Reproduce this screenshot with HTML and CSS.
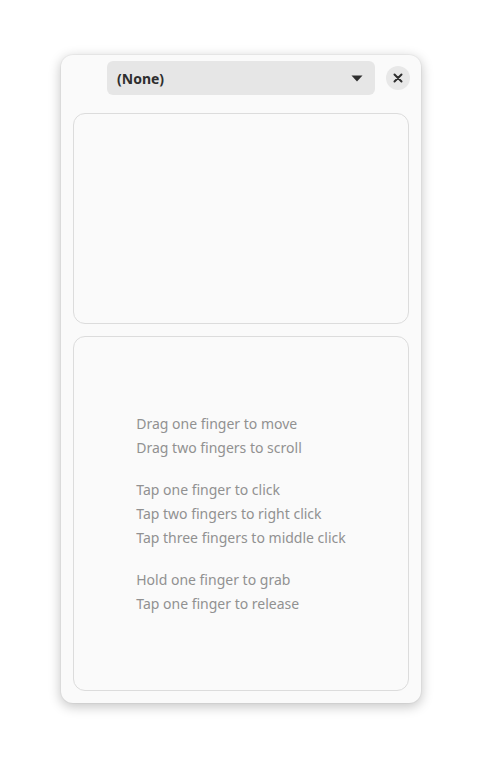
FILE: index.html
```html
<!DOCTYPE html>
<html>
<head>
<meta charset="utf-8">
<link rel="stylesheet" href="styles.css">
</head>
<body>
<div class="window">
  <div class="header">
    <div class="dropdown">
      <span class="dd-label">(None)</span>
      <svg class="dd-arrow" width="12" height="7" viewBox="0 0 12 7"><path d="M0.5 0.5 L11.5 0.5 L6 6.5 Z" fill="#2e2e2e"/></svg>
    </div>
    <div class="close">
      <svg width="10" height="10" viewBox="0 0 10 10"><path d="M1.5 1.5 L8.5 8.5 M8.5 1.5 L1.5 8.5" stroke="#2e2e2e" stroke-width="2" stroke-linecap="round"/></svg>
    </div>
  </div>
  <div class="panel panel-top"></div>
  <div class="panel panel-bottom">
    <div class="help">
      <div class="group">
        <div>Drag one finger to move</div>
        <div>Drag two fingers to scroll</div>
      </div>
      <div class="group">
        <div>Tap one finger to click</div>
        <div>Tap two fingers to right click</div>
        <div>Tap three fingers to middle click</div>
      </div>
      <div class="group">
        <div>Hold one finger to grab</div>
        <div>Tap one finger to release</div>
      </div>
    </div>
  </div>
</div>
</body>
</html>
```
FILE: styles.css
```css
html, body {
  margin: 0;
  padding: 0;
  background: #ffffff;
}
body {
  width: 482px;
  height: 770px;
  font-family: "Noto Sans", "Open Sans", sans-serif;
}
.window {
  margin: 55px 0 0 61px;
  width: 360px;
  height: 648px;
  box-sizing: border-box;
  background: #fafafa;
  border-radius: 12px;
  box-shadow: 0 3px 12px 1px rgba(0,0,0,0.22), 0 0 0 1px rgba(0,0,0,0.03);
  display: flex;
  flex-direction: column;
  padding: 6px 12px 12px 12px;
  gap: 12px;
}
.header {
  display: flex;
  align-items: center;
  height: 34px;
  margin-bottom: 6px;
  padding-left: 34px;
  margin-right: -1px;
}
.dropdown {
  width: 268px;
  height: 34px;
  box-sizing: border-box;
  background: #e6e6e6;
  border-radius: 6px;
  display: flex;
  align-items: center;
  justify-content: space-between;
  padding: 0 12px 0 10px;
}
.dd-label {
  font-weight: 700;
  font-size: 14px;
  color: #2e2e2e;
}
.close {
  margin-left: 11px;
  width: 24px;
  height: 24px;
  border-radius: 50%;
  background: #e8e8e8;
  display: flex;
  align-items: center;
  justify-content: center;
}
.panel {
  box-sizing: border-box;
  border: 1px solid #dcdcdc;
  border-radius: 12px;
  background: #fafafa;
}
.panel-top {
  height: 211px;
  flex: none;
}
.panel-bottom {
  flex: 1;
  display: flex;
  align-items: center;
  justify-content: center;
}
.help {
  display: flex;
  flex-direction: column;
  gap: 18px;
  font-size: 14px;
  line-height: 24px;
  color: #919191;
}
```
